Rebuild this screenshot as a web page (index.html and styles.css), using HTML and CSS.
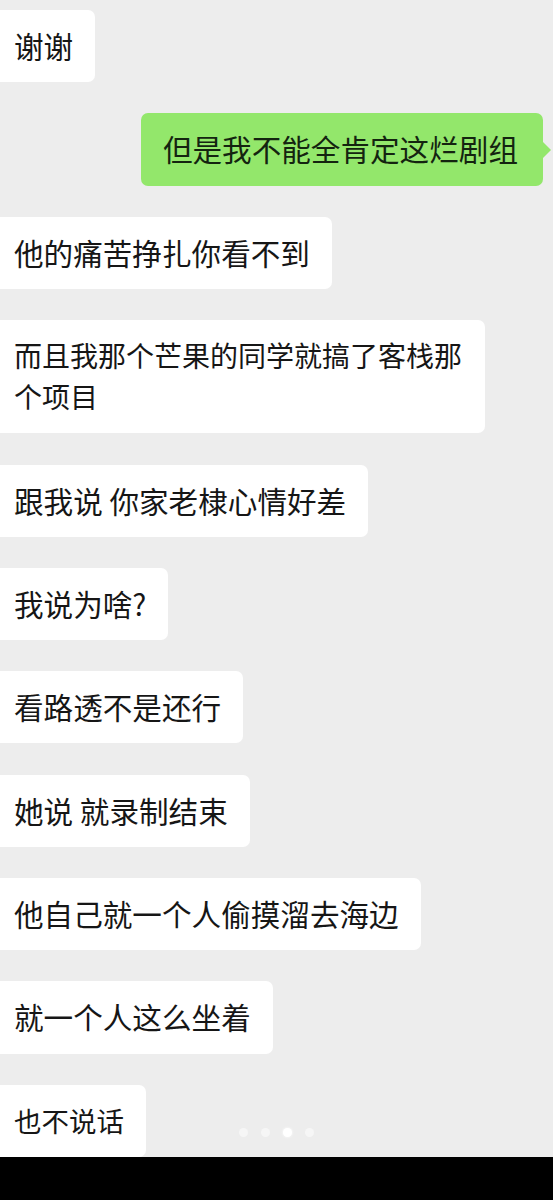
FILE: index.html
```html
<!DOCTYPE html>
<html lang="zh-CN">
<head>
  <meta charset="UTF-8" />
  <title>聊天记录</title>
  <link rel="stylesheet" href="styles.css">
</head>
<body>

  <!-- Chat history -->
  <div class="chat">
    <div class="msg left"><div class="bubble">谢谢</div></div>
    <div class="msg right"><div class="bubble mine">但是我不能全肯定这烂剧组</div></div>
    <div class="msg left"><div class="bubble">他的痛苦挣扎你看不到</div></div>
    <div class="msg left"><div class="bubble long">而且我那个芒果的同学就搞了客栈那个项目</div></div>
    <div class="msg left"><div class="bubble">跟我说 你家老棣心情好差</div></div>
    <div class="msg left"><div class="bubble">我说为啥?</div></div>
    <div class="msg left"><div class="bubble">看路透不是还行</div></div>
    <div class="msg left"><div class="bubble">她说 就录制结束</div></div>
    <div class="msg left"><div class="bubble">他自己就一个人偷摸溜去海边</div></div>
    <div class="msg left"><div class="bubble">就一个人这么坐着</div></div>
    <div class="msg left"><div class="bubble small">也不说话</div></div>

    <!-- page indicator -->
    <div class="dots">
      <span class="dot"></span>
      <span class="dot"></span>
      <span class="dot active"></span>
      <span class="dot"></span>
    </div>
  </div>

  <div class="bottom-bar"></div>

</body>
</html>
```

FILE: styles.css
```css
body {
  margin: 0;
  background: #ededed;
  font-family: 'Noto Sans CJK SC', 'Noto Sans', sans-serif;
  color: #161616;
}
.chat {
  position: relative;
  height: 1157px;
  box-sizing: border-box;
  padding-top: 10px;
  display: flex;
  flex-direction: column;
  gap: 31.2px;
  overflow: hidden;
}
.msg {
  display: flex;
}
.msg.right {
  justify-content: flex-end;
  padding-right: 10px;
}
.bubble {
  background: #fff;
  border-radius: 0 7px 7px 0;
  font-size: 29.6px;
  line-height: 41px;
  padding: 15px 22px 16.2px 14px;
}
.bubble.long {
  font-size: 28px;
  max-width: 449px;
}
.bubble.small {
  font-size: 27.5px;
}
/* own message: green with a tail */
.bubble.mine {
  position: relative;
  background: #93e76b;
  border-radius: 7px;
  padding: 15px 25px 16.2px 22px;
  color: #142410;
}
.bubble.mine::after {
  content: '';
  position: absolute;
  right: -8px;
  top: 29px;
  border-left: 8px solid #93e76b;
  border-top: 8px solid transparent;
  border-bottom: 8px solid transparent;
}
.dots {
  position: absolute;
  left: 0;
  right: 0;
  bottom: 20px;
  display: flex;
  justify-content: center;
  gap: 13px;
}
.dot {
  width: 9px;
  height: 9px;
  border-radius: 50%;
  background: #f6f6f6;
}
.dot.active {
  background: #ffffff;
  box-shadow: 0 0 3px #fff;
}
.bottom-bar {
  height: 43px;
  background: #000;
}
```
